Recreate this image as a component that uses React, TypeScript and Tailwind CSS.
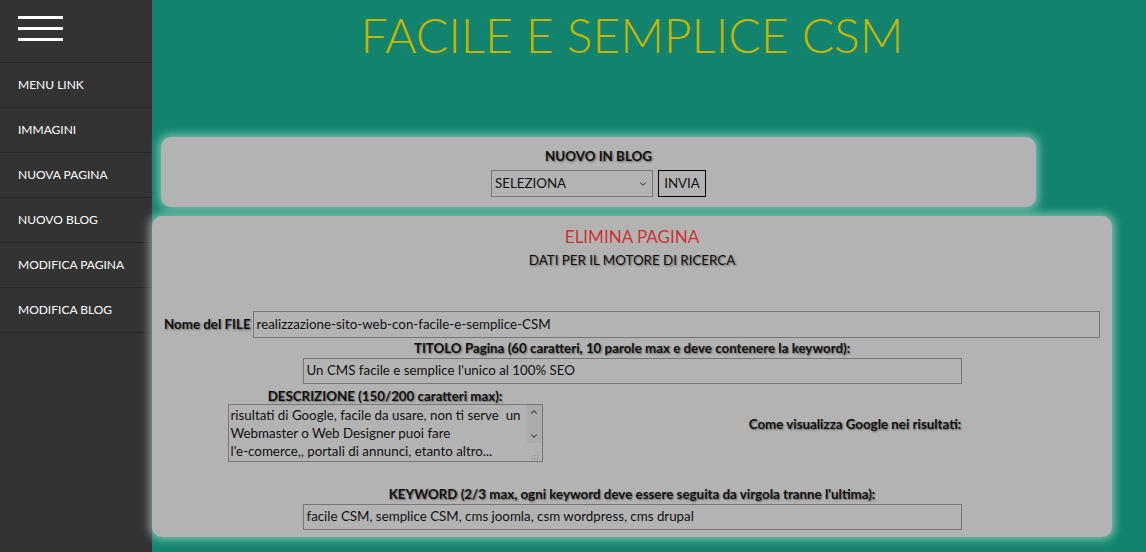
import React from 'react';
import { ChevronDown, ChevronUp } from 'lucide-react';

const menu = ['MENU LINK', 'IMMAGINI', 'NUOVA PAGINA', 'NUOVO BLOG', 'MODIFICA PAGINA', 'MODIFICA BLOG'];

const shadowText = '[text-shadow:1px_1px_2px_rgba(0,0,0,0.45)]';

const Sidebar: React.FC = () => (
  <aside className="w-[152px] shrink-0 bg-[#333333] min-h-[552px]">
    <div className="h-[63px] border-b border-[#272727] pl-[18px] pt-[16px] flex flex-col gap-[8px]">
      <span className="block w-[45px] h-[3px] bg-white" />
      <span className="block w-[45px] h-[3px] bg-white" />
      <span className="block w-[45px] h-[3px] bg-white" />
    </div>
    {menu.map((m) => (
      <div
        key={m}
        className="h-[45px] border-b border-[#272727] pl-[18px] flex items-center text-[12px] text-white"
      >
        {m}
      </div>
    ))}
  </aside>
);

const App: React.FC = () => {
  return (
    <div className="flex w-[1146px] h-[552px] overflow-hidden bg-[#12846e] font-['Lato','Noto_Sans',sans-serif] text-[13.33px] text-[#111]">
      <Sidebar />
      <main className="w-[960px] shrink-0 flex flex-col">
        <h1 className="text-center text-[48px] font-light leading-none text-[#c4b500] pt-[11px] h-[137px]">
          FACILE E SEMPLICE CSM
        </h1>

        <section className="ml-[9px] w-[875px] h-[70px] rounded-[10px] bg-[#b3b3b3] shadow-[0_0_8px_3px_rgba(200,235,220,0.55)] flex flex-col items-center pt-[11px]">
          <div className={`font-bold leading-[16px] ${shadowText}`}>NUOVO IN BLOG</div>
          <div className="flex gap-[5px] mt-[6px]">
            <div className="w-[162px] h-[27px] border border-[#777] flex items-center justify-between pl-[3px] pr-[4px]">
              <span>SELEZIONA</span>
              <ChevronDown className="w-[10px] h-[10px] text-[#444]" strokeWidth={2.5} />
            </div>
            <button className="w-[48px] h-[27px] border border-black leading-none">INVIA</button>
          </div>
        </section>

        <section className="mt-[9px] w-[960px] h-[321px] rounded-[10px] bg-[#b3b3b3] shadow-[0_0_8px_3px_rgba(200,235,220,0.55)] flex flex-col pt-[11px]">
          <div className="text-center text-[17px] leading-[20px] text-[#cc3333]">ELIMINA PAGINA</div>
          <div className={`text-center leading-[16px] mt-[5px] ${shadowText}`}>DATI PER IL MOTORE DI RICERCA</div>

          <div className="flex items-center px-[12px] mt-[43px]">
            <span className={`font-bold mr-[2px] ${shadowText}`}>Nome del FILE</span>
            <div className="flex-1 h-[27px] border border-[#777] flex items-center pl-[3px]">
              realizzazione-sito-web-con-facile-e-semplice-CSM
            </div>
          </div>

          <div className={`text-center font-bold leading-[16px] mt-[2px] ${shadowText}`}>
            TITOLO Pagina (60 caratteri, 10 parole max e deve contenere la keyword):
          </div>
          <div className="mx-auto w-[659px] h-[26px] border border-[#777] flex items-center pl-[3px] mt-[2px]">
            Un CMS facile e semplice l'unico al 100% SEO
          </div>

          <div className="flex pl-[12px] mt-[4px]">
            <div className="w-[442px] flex flex-col items-center">
              <div className={`font-bold leading-[16px] ${shadowText}`}>DESCRIZIONE (150/200 caratteri max):</div>
              <div className="w-[315px] h-[58px] border border-[#777] flex">
                <div className="flex-1 pl-[2px] pt-[1px] leading-[18px] overflow-hidden whitespace-pre">
                  {'risultati di Google, facile da usare, non ti serve  un\nWebmaster o Web Designer puoi fare\nl\'e-comerce,, portali di annunci, etanto altro...'}
                </div>
                <div className="w-[15px] flex flex-col items-center">
                  <div className="w-[15px] h-[38px] bg-[#ababab] flex flex-col items-center justify-between py-[2px]">
                    <ChevronUp className="w-[10px] h-[10px] text-[#333]" strokeWidth={2.5} />
                    <ChevronDown className="w-[10px] h-[10px] text-[#333]" strokeWidth={2.5} />
                  </div>
                  <svg className="mt-auto mb-[1px]" width="9" height="9" viewBox="0 0 9 9">
                    <g fill="#888">
                      <rect x="7" y="1" width="1.3" height="1.3" />
                      <rect x="4" y="4" width="1.3" height="1.3" />
                      <rect x="7" y="4" width="1.3" height="1.3" />
                      <rect x="1" y="7" width="1.3" height="1.3" />
                      <rect x="4" y="7" width="1.3" height="1.3" />
                      <rect x="7" y="7" width="1.3" height="1.3" />
                    </g>
                  </svg>
                </div>
              </div>
            </div>
            <div className="w-[498px] flex items-center justify-center">
              <span className={`font-bold ${shadowText}`}>Come visualizza Google nei risultati:</span>
            </div>
          </div>

          <div className={`text-center font-bold leading-[16px] mt-[24px] ${shadowText}`}>
            KEYWORD (2/3 max, ogni keyword deve essere seguita da virgola tranne l'ultima):
          </div>
          <div className="mx-auto w-[659px] h-[26px] border border-[#777] flex items-center pl-[3px] mt-[2px]">
            facile CSM, semplice CSM, cms joomla, csm wordpress, cms drupal
          </div>
        </section>
      </main>
    </div>
  );
};

export default App;
